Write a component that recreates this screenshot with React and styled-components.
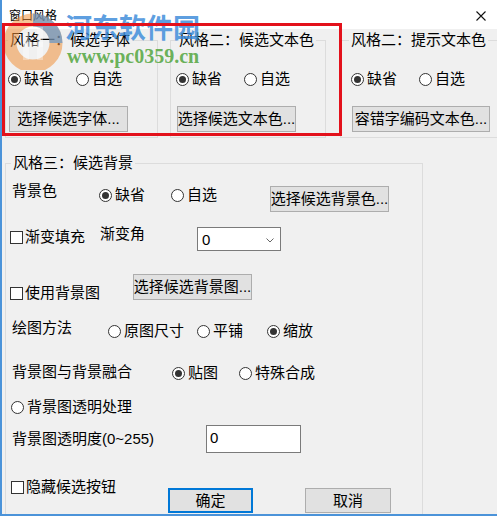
import React from 'react';
import styled, { createGlobalStyle } from 'styled-components';

const GlobalStyle = createGlobalStyle`
  *, *::before, *::after { box-sizing: border-box; }
  html, body { margin: 0; padding: 0; background: #f0f0f0; }
  body {
    font-family: "Liberation Sans", "Noto Sans CJK SC", sans-serif;
    color: #000;
  }
`;

const Window = styled.div`
  position: relative;
  width: 497px;
  height: 516px;
  overflow: hidden;
  background: #f0f0f0;
  border-left: 2px solid #4b93d9;
  border-bottom: 2px solid #4b93d9;
  font-size: 15px;
  line-height: 20px;
`;

const TitleBar = styled.div`
  height: 29px;
  background: #fff;
  display: flex;
  align-items: center;
  justify-content: space-between;
  padding: 3px 11px 0 7px;
  font-size: 12px;
  line-height: 16px;
`;

const Body = styled.div`
  padding: 1px 0 0 3px;
  display: flex;
  flex-direction: column;
  align-items: flex-start;
`;

const TopRow = styled.div`
  display: flex;
  align-items: flex-start;
`;

const Group = styled.fieldset`
  margin: ${p => p.$mt || 0}px 0 0 ${p => p.$ml || 0}px;
  padding: 0;
  border: 1px solid #dcdcdc;
  width: ${p => p.$w}px;
  min-width: 0;
  flex-shrink: 0;
`;

const Legend = styled.legend`
  margin-left: ${p => p.$ml}px;
  padding: 0 2px;
  font-size: 15px;
  line-height: 20px;
  white-space: nowrap;
`;

const GroupBody = styled.div`
  padding: 19px 0 5px ${p => p.$pl}px;
  display: flex;
  flex-direction: column;
  align-items: flex-start;
`;

const BigBody = styled.div`
  padding: 8px 0 30px 0;
  display: flex;
  flex-direction: column;
  align-items: flex-start;
`;

const Row = styled.div`
  display: flex;
  align-items: flex-start;
  margin-top: ${p => p.$mt || 0}px;
  padding-left: ${p => p.$pl || 0}px;
`;

const Choice = styled.div`
  display: flex;
  align-items: center;
  gap: ${p => (p.$box ? 2 : 3)}px;
  height: 20px;
  width: ${p => (p.$w ? `${p.$w}px` : 'auto')};
  margin-top: ${p => p.$dy || 0}px;
  flex-shrink: 0;
  white-space: nowrap;
`;

const RadioMark = styled.span`
  width: 13px;
  height: 13px;
  border-radius: 50%;
  border: 1px solid #333;
  background: #fff;
  display: flex;
  align-items: center;
  justify-content: center;
  flex-shrink: 0;
  &::after {
    content: '';
    width: 7px;
    height: 7px;
    border-radius: 50%;
    background: #333;
    display: ${p => (p.$on ? 'block' : 'none')};
  }
`;

const CheckMark = styled.span`
  width: 13px;
  height: 13px;
  border: 1px solid #333;
  background: #fff;
  flex-shrink: 0;
`;

const Label = styled.div`
  width: ${p => (p.$w ? `${p.$w}px` : 'auto')};
  margin-top: ${p => p.$dy || 0}px;
  height: 20px;
  flex-shrink: 0;
  white-space: nowrap;
`;

const Button = styled.div`
  width: ${p => p.$w}px;
  height: ${p => p.$h || 26}px;
  margin: ${p => p.$mt || 0}px 0 0 ${p => p.$ml || 0}px;
  background: #e1e1e1;
  border: ${p => (p.$default ? '2px solid #0078d7' : '1px solid #adadad')};
  display: flex;
  align-items: center;
  justify-content: center;
  flex-shrink: 0;
  white-space: nowrap;
`;

const Select = styled.div`
  width: ${p => p.$w}px;
  height: 24px;
  margin-top: ${p => p.$dy || 0}px;
  background: #fff;
  border: 1px solid #7a7a7a;
  display: flex;
  align-items: flex-start;
  justify-content: space-between;
  padding: 2px 6px 0 4px;
  flex-shrink: 0;
`;

const Chevron = styled.svg`
  margin-top: 8px;
`;

const TextField = styled.div`
  width: ${p => p.$w}px;
  height: 28px;
  background: #fff;
  border: 1px solid #7a7a7a;
  padding: 2px 3px 0;
  flex-shrink: 0;
`;

const ButtonPair = styled.div`
  display: flex;
  gap: 52px;
  margin-top: ${p => p.$dy || 0}px;
`;

const RedFrame = styled.div`
  position: absolute;
  left: 0;
  top: 23px;
  width: 340px;
  height: 113px;
  border: 3px solid #e3111b;
  pointer-events: none;
`;

const Logo = styled.svg`
  position: absolute;
  left: 0px;
  top: 12px;
  pointer-events: none;
`;

const Brand = styled.div`
  position: absolute;
  left: 63px;
  top: 12px;
  font-family: "Noto Sans CJK SC", sans-serif;
  font-weight: 700;
  font-size: 27px;
  line-height: 30px;
  color: rgba(58, 138, 218, 0.82);
  white-space: nowrap;
  pointer-events: none;
`;

const BrandUrl = styled.div`
  position: absolute;
  left: 65px;
  top: 46px;
  font-family: "Liberation Serif", serif;
  font-weight: 700;
  font-size: 20px;
  line-height: 20px;
  color: rgba(88, 168, 70, 0.9);
  white-space: nowrap;
  pointer-events: none;
`;

function Radio({ on, w, dy, children }) {
  return (
    <Choice $w={w} $dy={dy}>
      <RadioMark $on={on} />
      <span>{children}</span>
    </Choice>
  );
}

function Check({ w, dy, children }) {
  return (
    <Choice $box $w={w} $dy={dy}>
      <CheckMark />
      <span>{children}</span>
    </Choice>
  );
}

function CloseIcon() {
  return (
    <svg width="10" height="10" viewBox="0 0 10 10">
      <path d="M0.5 0.5 L9.5 9.5 M9.5 0.5 L0.5 9.5" stroke="#111" strokeWidth="1.1" fill="none" />
    </svg>
  );
}

function TopGroup({ w, ml, legendMl, pl, title, button, buttonW }) {
  return (
    <Group $w={w} $ml={ml}>
      <Legend $ml={legendMl}>{title}</Legend>
      <GroupBody $pl={pl}>
        <Row>
          <Radio on w={68}>缺省</Radio>
          <Radio>自选</Radio>
        </Row>
        <Button $w={buttonW} $mt={17} $ml={1}>{button}</Button>
      </GroupBody>
    </Group>
  );
}

export default function App() {
  return (
    <>
      <GlobalStyle />
      <Window>
        <TitleBar>
          <span>窗口风格</span>
          <CloseIcon />
        </TitleBar>
        <Body>
          <TopRow>
            <TopGroup w={153} legendMl={2} pl={2} title="风格一：候选字体" button="选择候选字体..." buttonW={119} />
            <TopGroup w={156} ml={12} legendMl={6} pl={5} title="风格二：候选文本色" button="选择候选文本色..." buttonW={119} />
            <TopGroup w={170} ml={14} legendMl={8} pl={10} title="风格二：提示文本色" button="容错字编码文本色..." buttonW={138} />
          </TopRow>

          <Group $w={418} $mt={15}>
            <Legend $ml={5}>风格三：候选背景</Legend>
            <BigBody>
              <Row $pl={6}>
                <Label $w={87}>背景色</Label>
                <Radio on w={72} dy={4}>缺省</Radio>
                <Radio w={99} dy={4}>自选</Radio>
                <Button $w={119} $mt={5}>选择候选背景色...</Button>
              </Row>

              <Row $pl={4} $mt={12}>
                <Check w={90} dy={3}>渐变填充</Check>
                <Label $w={97}>渐变角</Label>
                <Select $w={84} $dy={3}>
                  <span>0</span>
                  <Chevron width="8" height="5" viewBox="0 0 8 5">
                    <path d="M0.5 0.5 L4 4 L7.5 0.5" stroke="#666" strokeWidth="1" fill="none" />
                  </Chevron>
                </Select>
              </Row>

              <Row $pl={4} $mt={23}>
                <Check w={123} dy={9}>使用背景图</Check>
                <Button $w={119}>选择候选背景图...</Button>
              </Row>

              <Row $pl={6} $mt={15}>
                <Label $w={96}>绘图方法</Label>
                <Radio w={89} dy={3}>原图尺寸</Radio>
                <Radio w={70} dy={3}>平铺</Radio>
                <Radio on dy={3}>缩放</Radio>
              </Row>

              <Row $pl={6} $mt={21}>
                <Label $w={160}>背景图与背景融合</Label>
                <Radio on w={67} dy={1}>贴图</Radio>
                <Radio dy={1}>特殊合成</Radio>
              </Row>

              <Row $pl={5} $mt={14}>
                <Radio>背景图透明处理</Radio>
              </Row>

              <Row $pl={6} $mt={8}>
                <Label $w={194} $dy={4}>背景图透明度(0~255)</Label>
                <TextField $w={95}>0</TextField>
              </Row>

              <Row $pl={5} $mt={24}>
                <Check w={157}>隐藏候选按钮</Check>
                <ButtonPair $dy={11}>
                  <Button $w={85} $h={25} $default>确定</Button>
                  <Button $w={86} $h={25}>取消</Button>
                </ButtonPair>
              </Row>
            </BigBody>
          </Group>
        </Body>

        <Logo width="62" height="58" viewBox="0 0 62 58">
          <circle cx="31" cy="31" r="23" fill="none" stroke="rgba(240,145,60,0.55)" strokeWidth="13" />
          <path d="M31 8 A23 23 0 0 1 54 31" fill="none" stroke="rgba(60,140,220,0.55)" strokeWidth="13" />
          <rect x="21" y="21" width="6" height="27" fill="rgba(255,255,255,0.35)" />
          <rect x="35" y="15" width="6" height="33" fill="rgba(255,255,255,0.35)" />
          <rect x="21" y="30" width="20" height="5" fill="rgba(255,255,255,0.35)" />
        </Logo>
        <Brand>河东软件园</Brand>
        <BrandUrl>www.pc0359.cn</BrandUrl>
        <RedFrame />
      </Window>
    </>
  );
}
